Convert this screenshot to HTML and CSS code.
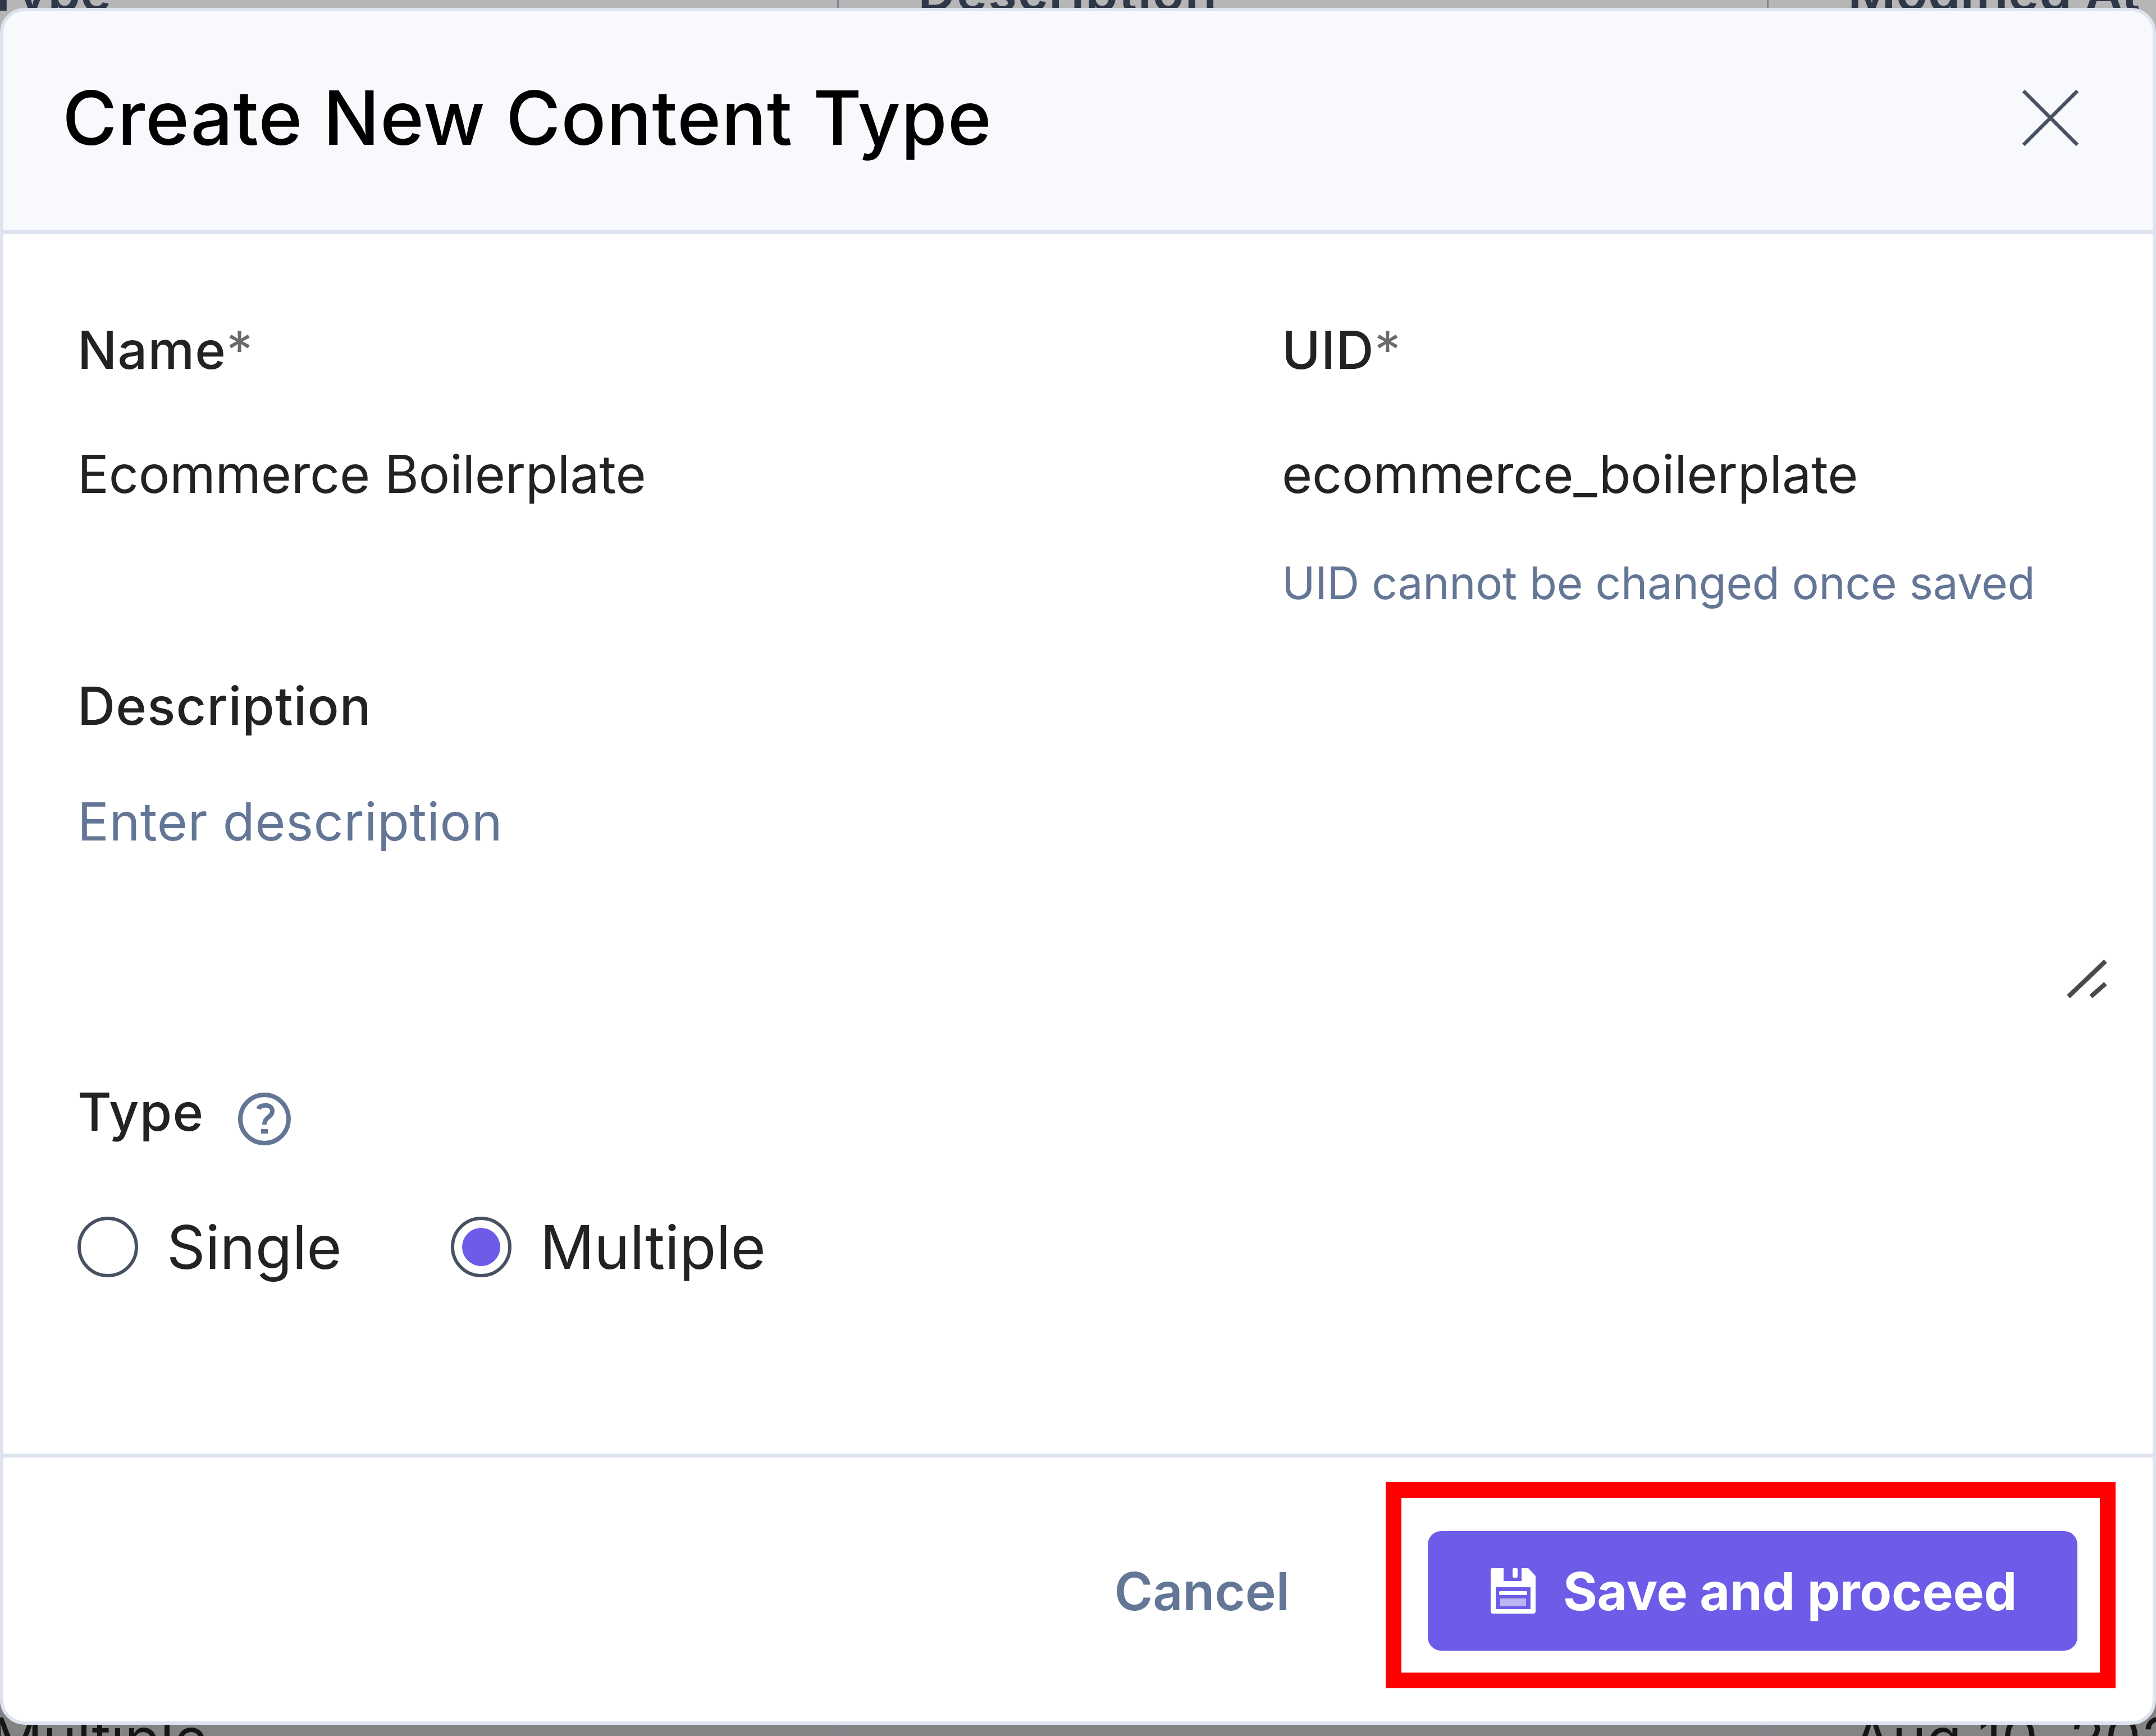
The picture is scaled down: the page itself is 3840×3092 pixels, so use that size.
FILE: index.html
```html
<!DOCTYPE html>
<html lang="en">
<head>
    <meta charset="UTF-8">
    <meta name="viewport" content="width=device-width, initial-scale=1.0">
    <title>Create New Content Type</title>
    <link rel="stylesheet" href="styles.css">
</head>
<body>
    <!-- Content type list behind the modal -->
    <div class="backdrop">
        <div class="table-row table-head">
            <span class="cell">Type</span>
            <span class="cell wide">Description</span>
            <span class="cell">Modified At</span>
        </div>
        <div class="table-row table-data">
            <span class="cell">Multiple</span>
            <span class="cell"></span>
            <span class="cell">Aug 10, 2022</span>
        </div>
    </div>

    <div class="modal">
        <div class="modal-header">
            <h1>Create New Content Type</h1>
            <svg class="close-icon" viewBox="0 0 104 104">
                <path d="M4 4 L100 100 M100 4 L4 100" />
            </svg>
        </div>

        <div class="modal-body">
            <div class="form-row">
                <div class="form-group">
                    <div class="label">Name<span class="required">*</span></div>
                    <div class="value">Ecommerce Boilerplate</div>
                </div>
                <div class="form-group">
                    <div class="label">UID<span class="required">*</span></div>
                    <div class="value">ecommerce_boilerplate</div>
                    <div class="help-text">UID cannot be changed once saved</div>
                </div>
            </div>

            <div class="label description-label">Description</div>
            <div class="textarea">
                <span class="placeholder">Enter description</span>
                <svg class="resize-icon" viewBox="0 0 74 74">
                    <path d="M4 67 L70 4 M44 67 L70 44" />
                </svg>
            </div>

            <div class="type-label">
                <span class="label">Type</span>
                <svg class="help-icon" viewBox="0 0 96 96">
                    <circle cx="48" cy="48" r="43" />
                    <path d="M37 30 C40 22 62 20 62 34 C62 45 48 44 48 58" />
                    <path d="M42 70 H54" />
                </svg>
            </div>

            <div class="radio-group">
                <div class="radio-option">
                    <span class="radio"></span>
                    <span>Single</span>
                </div>
                <div class="radio-option">
                    <span class="radio checked"></span>
                    <span>Multiple</span>
                </div>
            </div>
        </div>

        <div class="modal-footer">
            <span class="cancel">Cancel</span>
            <div class="save-button">
                <svg class="save-icon" viewBox="0 0 80 81">
                    <path class="disk" fill-rule="evenodd" d="M3 0 H23 V23 H55 V0 H67 L80 14 V77 Q80 81 76 81 H4 Q0 81 0 77 V3 Q0 0 3 0 Z M9 34 V73 H71 V34 Z" />
                    <rect class="disk" x="39" y="0" width="9" height="17" rx="2" />
                    <rect class="disk" x="15" y="41" width="50" height="7" rx="2" />
                    <rect class="disk faded" x="17" y="54" width="46" height="14" />
                </svg>
                <span>Save and proceed</span>
                <div class="highlight"></div>
            </div>
        </div>
    </div>
</body>
</html>
```
FILE: styles.css
```css
* {
    box-sizing: border-box;
}

body {
    margin: 0;
    width: 3840px;
    height: 3092px;
    padding-top: 14px;
    overflow: hidden;
    background-color: #a9a9a9;
    font-family: Inter, "Liberation Sans", sans-serif;
    font-size: 93px;
    line-height: 120px;
    color: #222222;
}

/* Table behind the modal */
.backdrop {
    position: absolute;
    top: 0;
    left: 0;
    width: 3840px;
    height: 3092px;
    overflow: hidden;
    display: flex;
    flex-direction: column;
    justify-content: space-between;
}

.table-row {
    display: grid;
    grid-template-columns: 1494px 1656px 1fr;
    white-space: nowrap;
    overflow: hidden;
}

.table-head {
    height: 140px;
    background-color: #b6b6b6;
    font-weight: 600;
    color: #2f3848;
}

.table-data {
    height: 64px;
    background-color: #838383;
    font-size: 103px;
    color: #161616;
}

.cell {
    padding-left: 141px;
    border-right: 3px solid #7b8698;
}

.cell:first-child {
    padding-left: 0;
    text-indent: -25px;
}

.cell:last-child {
    border-right: none;
}

.table-head .cell {
    margin-top: -75px;
    height: 215px;
}

.table-data .cell {
    padding-top: 9px;
    height: 130px;
}

.table-data .cell:first-child {
    text-indent: -17px;
}

.table-data .cell:last-child {
    padding-left: 149px;
}

.wide {
    letter-spacing: 1.4px;
}

/* Modal */
.modal {
    position: relative;
    width: 3840px;
    height: 3058px;
    display: flex;
    flex-direction: column;
    background-color: #ffffff;
    border: 6px solid #dde3ef;
    border-radius: 44px;
    overflow: hidden;
}

.modal-header {
    height: 397px;
    padding: 0 130px 10px 105px;
    display: flex;
    align-items: center;
    justify-content: space-between;
    background-color: #f8f9fd;
    border-bottom: 7px solid #dde3ef;
}

.modal-header h1 {
    margin: 0;
    font-size: 133px;
    font-weight: 500;
    letter-spacing: 0.8px;
    color: #000000;
}

.close-icon {
    width: 104px;
    height: 104px;
    fill: none;
    stroke: #475161;
    stroke-width: 6.5;
}

.modal-body {
    flex: 1;
    padding: 146px 80px 0 132px;
}

.form-row {
    display: grid;
    grid-template-columns: 2145px 1fr;
}

.label {
    font-weight: 500;
    letter-spacing: 1.2px;
}

.required {
    font-weight: 400;
    color: #6b6b6b;
}

.value {
    margin-top: 101px;
    letter-spacing: -0.2px;
}

.help-text {
    margin-top: 84px;
    font-size: 80px;
    line-height: 100px;
    letter-spacing: -0.25px;
    color: #647696;
}

.description-label {
    margin-top: 109px;
}

.textarea {
    height: 379px;
    margin-top: 86px;
    display: flex;
    justify-content: space-between;
}

.placeholder {
    letter-spacing: 0.5px;
    color: #647696;
}

.resize-icon {
    align-self: flex-end;
    width: 74px;
    height: 74px;
    fill: none;
    stroke: #4a4a4a;
    stroke-width: 8;
}

.type-label {
    margin-top: 138px;
    display: flex;
    align-items: flex-start;
    gap: 60px;
}

.help-icon {
    width: 96px;
    height: 96px;
    margin-top: 25px;
    fill: none;
    stroke: #647696;
    stroke-width: 8;
}

.radio-group {
    margin-top: 120px;
    display: flex;
    gap: 194px;
    font-size: 107px;
}

.radio-option {
    display: flex;
    align-items: center;
    gap: 51px;
}

.radio {
    width: 108px;
    height: 108px;
    border: 6px solid #475161;
    border-radius: 50%;
    display: flex;
    align-items: center;
    justify-content: center;
}

.radio.checked::after {
    content: "";
    width: 68px;
    height: 68px;
    border-radius: 50%;
    background-color: #6c5ce7;
}

.modal-footer {
    height: 477px;
    padding: 5px 134px 0 0;
    display: flex;
    align-items: center;
    justify-content: flex-end;
    border-top: 7px solid #dde3ef;
}

.cancel {
    margin-right: 246px;
    font-weight: 600;
    color: #647696;
}

.save-button {
    position: relative;
    width: 1157px;
    height: 213px;
    padding-left: 112px;
    display: flex;
    align-items: center;
    gap: 49px;
    border-radius: 24px;
    background-color: #6c5ce7;
    color: #ffffff;
    font-weight: 700;
    letter-spacing: -0.3px;
}

.save-icon {
    width: 80px;
    height: 81px;
}

.disk {
    fill: #ffffff;
}

.faded {
    opacity: 0.55;
}

/* Red frame around the save button */
.highlight {
    position: absolute;
    top: -87px;
    left: -75px;
    width: 1300px;
    height: 367px;
    border: 28px solid #ff0000;
}
```
